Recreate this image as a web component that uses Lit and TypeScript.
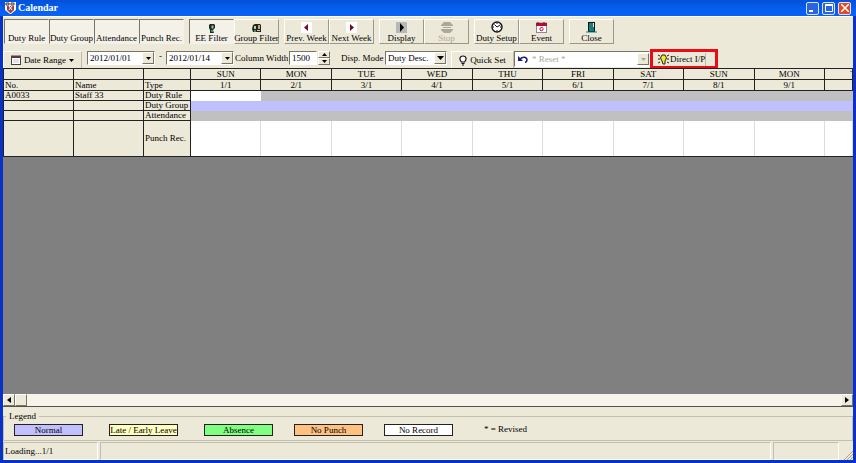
import { LitElement, html, svg, css, nothing } from "lit";
import { customElement } from "lit/decorators.js";
import { classMap } from "lit/directives/class-map.js";

const icons: Record<string, unknown> = {
  app: svg`<svg width="11" height="12" viewBox="0 0 11 12"><path d="M0 0h11v8L6 12H5L0 8z" fill="#fff"/><path d="M1 1h3v2H1zM6 1h3v2H6z" fill="none" stroke="#333"/><path d="M2 4h7v4L6 11H5L2 8z" fill="#a34050"/><path d="M4 4l3 4M7 4L4 8" stroke="#fff"/></svg>`,
  person: svg`<svg width="10" height="10" viewBox="0 0 10 10"><path d="M3 1h4l1 1v3L6 7 7 10H3V7L2 5V2z" fill="#1a2a28"/><path d="M4.500 2.500h2v3h-2z" fill="#c8b46a"/><path d="M4 7h2v2H4z" fill="#2a9088"/></svg>`,
  group: svg`<svg width="10" height="10" viewBox="0 0 10 10"><path d="M1 2l2-1h5l1 1v7H1L0 6z" fill="#222"/><path d="M2 3h2v3H2z" fill="#d8c680"/><path d="M6 2h2v4H6z" fill="#d0a850"/><path d="M2 7h2v2H2z" fill="#2a9088"/><path d="M5 7h3v1H5z" fill="#ccc"/></svg>`,
  prev: svg`<svg width="11" height="11" viewBox="0 0 11 11"><rect width="11" height="11" fill="#fff"/><path d="M7 2v7L3 5.500z" fill="#7a0a1c"/></svg>`,
  next: svg`<svg width="11" height="11" viewBox="0 0 11 11"><rect width="11" height="11" fill="#fff"/><path d="M4 2v7l4-3.500z" fill="#7a0a1c"/></svg>`,
  display: svg`<svg width="11" height="11" viewBox="0 0 11 11"><rect width="11" height="11" fill="#b8b8b8"/><path d="M4 1v9l4-4.500z" fill="#000"/></svg>`,
  stop: svg`<svg width="12" height="11" viewBox="0 0 12 11"><path d="M3 0h6l3 3v1H0V3zM0 7h12v1L9 11H3L0 8z" fill="#aca899"/><path d="M2 5.500h8" stroke="#aca899"/></svg>`,
  clock: svg`<svg width="12" height="12" viewBox="0 0 12 12"><circle cx="6" cy="6" r="5" fill="#fff" stroke="#111" stroke-width="1.400"/><path d="M3.500 3.500L6 6l3-2M6 2v1M6 9v1M2 6h1M9 6h1" fill="none" stroke="#111"/></svg>`,
  event: svg`<svg width="11" height="11" viewBox="0 0 11 11"><rect x=".5" y="1" width="10" height="9.500" fill="#fff" stroke="#a08090"/><path d="M0 1h11v3H0z" fill="#b01030"/><path d="M2 0v2M8 0v2" stroke="#333"/><path d="M7 5L4 6v2l1 1 2-1V6" fill="none" stroke="#d02040"/></svg>`,
  door: svg`<svg width="11" height="11" viewBox="0 0 11 11"><path d="M2 0h7v10H2z" fill="#111"/><path d="M3 1h5v8H3z" fill="#128080"/><path d="M7 1h1v4H7z" fill="#e8e8e8"/><path d="M0 10h11" stroke="#128080"/></svg>`,
  calendar: svg`<svg width="10" height="10" viewBox="0 0 10 10"><rect x=".5" y="1" width="9" height="8.500" fill="#fff" stroke="#444"/><path d="M0 1h10v2H0z" fill="#5a3a4a"/><path d="M2 5h6M2 7h6" stroke="#c8c8c8"/></svg>`,
  bulb: svg`<svg width="8" height="11" viewBox="0 0 8 11"><path d="M2.500 7C0 4.500.5 1 4 1s4 3.500 1.500 6z" fill="#fff" stroke="#111" stroke-width="1.200"/><path d="M2.500 8.500h3M3 10h2" stroke="#111"/></svg>`,
  undo: svg`<svg width="10" height="9" viewBox="0 0 10 9"><path d="M2 4c3-3 7-2 7 1 0 1-.5 2-2 2.500" fill="none" stroke="#1a1a80" stroke-width="1.500"/><path d="M0 1v5h5z" fill="#1a1a80"/></svg>`,
  flash: svg`<svg width="11" height="11" viewBox="0 0 11 11"><path d="M0 1l2 1M0 5h2M0 9l2-1M11 1L9 2M11 5H9M11 9L9 8" stroke="#222"/><path d="M4 7L2.500 4 4 1h3l1.500 3L7 7v3H5z" fill="#f4ee20" stroke="#222"/></svg>`,
  down: svg`<svg width="7" height="4" viewBox="0 0 7 4"><path d="M0 0h7L3.500 4z" fill="currentColor"/></svg>`,
  downS: svg`<svg width="5" height="3" viewBox="0 0 5 3"><path d="M0 0h5L2.500 3z" fill="currentColor"/></svg>`,
  upS: svg`<svg width="5" height="3" viewBox="0 0 5 3"><path d="M0 3h5L2.500 0z" fill="currentColor"/></svg>`,
  left: svg`<svg width="4" height="6" viewBox="0 0 4 6"><path d="M4 0v6L0 3z"/></svg>`,
  right: svg`<svg width="4" height="6" viewBox="0 0 4 6"><path d="M0 0v6l4-3z"/></svg>`,
  min: svg`<svg width="8" height="8" viewBox="0 0 8 8"><path d="M0 7h4" stroke="#fff" stroke-width="2"/></svg>`,
  max: svg`<svg width="8" height="8" viewBox="0 0 8 8"><path d="M.5 1h7v6.500h-7z" fill="none" stroke="#fff"/><path d="M0 1h8" stroke="#fff" stroke-width="2"/></svg>`,
  close: svg`<svg width="8" height="8" viewBox="0 0 8 8"><path d="M0 0l8 8M8 0L0 8" stroke="#fff" stroke-width="1.500"/></svg>`,
  grip: svg`<svg width="10" height="10" viewBox="0 0 10 10"><path d="M1 10l9-9M4 10l6-6M7 10l3-3" stroke="#a8a490"/></svg>`,
};

interface Tool { label: string; icon?: string; down?: boolean; off?: boolean }

const tools: Tool[][] = [
  [
    { label: "Duty Rule", down: true },
    { label: "Duty Group", down: true },
    { label: "Attendance", down: true },
    { label: "Punch Rec.", down: true },
  ],
  [{ label: "EE Filter", icon: "person", down: true }, { label: "Group Filter", icon: "group" }],
  [{ label: "Prev. Week", icon: "prev" }, { label: "Next Week", icon: "next" }],
  [{ label: "Display", icon: "display" }, { label: "Stop", icon: "stop", off: true }],
  [{ label: "Duty Setup", icon: "clock" }, { label: "Event", icon: "event" }],
  [{ label: "Close", icon: "door" }],
];

const days = ["SUN", "MON", "TUE", "WED", "THU", "FRI", "SAT", "SUN", "MON", "TUE"];

const rows = [
  { no: "A0033", name: "Staff 33", type: "Duty Rule", tone: "grey" },
  { no: "", name: "", type: "Duty Group", tone: "lilac" },
  { no: "", name: "", type: "Attendance", tone: "grey" },
  { no: "", name: "", type: "Punch Rec.", tone: "white" },
];

const legend = [
  ["Normal", "normal"],
  ["Late / Early Leave", "late"],
  ["Absence", "absence"],
  ["No Punch", "nopunch"],
  ["No Record", "norecord"],
];

@customElement("app-root")
export class AppRoot extends LitElement {
  static styles = css`
    :host {
      display: flex;
      flex-direction: column;
      box-sizing: border-box;
      min-height: 100vh;
      border: solid #0831c8;
      border-width: 0 3px 3px;
      background: #ece9d8;
      color: #000;
      font: 9px/10px "Liberation Serif", "Times New Roman", serif;
      white-space: nowrap;
    }
    *, *::before, *::after { box-sizing: border-box; }
    svg { display: block; flex: none; }
    button, input, select {
      font: inherit;
      color: inherit;
      margin: 0;
      padding: 0;
      border: 0;
      border-radius: 0;
      background: #ece9d8;
      min-width: 0;
    }
    button { display: flex; align-items: center; justify-content: center; }

    .title {
      display: flex;
      align-items: center;
      height: 16px;
      margin: 0 -3px;
      padding: 0 5px;
      gap: 2px;
      background: linear-gradient(#0450d8, #0560f0 60%, #0862f8);
      color: #fff;
    }
    .title h1 { flex: 1; margin: 0; font-size: 10px; line-height: 12px; }
    .win { display: flex; gap: 3px; }
    .win button { width: 13px; height: 13px; border: 1px solid #d8e4fc; border-radius: 2px; background: #2a64e0; }
    .win .x { background: #e04a24; }

    .tools { display: flex; gap: 5px; padding: 2px 0 0 1px; border-top: 1px solid #fff; }
    .set { display: flex; }
    .tool {
      width: 45px;
      height: 25px;
      flex-direction: column;
      justify-content: flex-end;
      border: 1px solid;
      border-color: #fff #9c9888 #9c9888 #fff;
    }
    .tool.down { background: #f4f2e8; border-color: #77746a #f4f2e8 #f4f2e8 #77746a; }
    .tool.off { color: #aca899; }

    .bar { display: flex; align-items: flex-start; padding: 7px 0 0; height: 24px; }
    .flat { height: 18px; gap: 3px; border: 1px solid; border-color: #fff #c0bca8 #c0bca8 #fff; }
    .range { width: 79px; margin-right: 5px; }
    .quick { width: 63px; gap: 3px; margin-left: 4px; }
    .box {
      display: flex;
      align-items: center;
      height: 14px;
      border: 1px solid;
      border-color: #77746a #fff #fff #77746a;
      background: #fff;
    }
    .box input, .box select { flex: 1; width: 0; height: 12px; padding-left: 2px; background: #fff; appearance: none; outline: 0; }
    .box button, .drop { flex: none; display: flex; align-items: center; justify-content: center; width: 12px; height: 12px; background: #ece9d8; border: 1px solid; border-color: #fff #77746a #77746a #fff; }
    .date { width: 68px; }
    .dash { width: 11px; text-align: center; }
    .lab { line-height: 14px; }
    .gapl { margin-left: 1px; width: 54px; }
    .num { width: 28px; }
    .spin { display: flex; flex-direction: column; width: 12px; margin: 0 11px 0 1px; }
    .spin button { height: 7px; border: 1px solid; border-color: #fff #77746a #77746a #fff; }
    .mode { width: 44px; }
    .disp { position: relative; width: 62px; }
    .reset { width: 136px; height: 16px; padding-left: 3px; }
    .reset, .reset button { color: #aca899; }
    .reset input { padding-left: 4px; }
    .mark { display: flex; align-items: center; height: 20px; width: 68px; margin-top: -2px; border: 3px solid #ee0a14; }
    .mark button { flex: 1; height: 13px; margin: 0 9px 0 5px; gap: 1px; border-right: 1px solid #c0bca8; justify-content: flex-start; }

    .grid { flex: 1; background: #808080; overflow: hidden; min-height: 160px; }
    table { width: 100%; table-layout: fixed; border-collapse: collapse; border-bottom: 1px solid #222; }
    th, td { padding: 0 0 0 1px; height: 11px; line-height: 10px; font-weight: 400; text-align: left; overflow: hidden; border: 1px solid #222; background: #ece9d8; }
    td { height: 10px; line-height: 9px; }
    th.day { text-align: center; padding: 0; }
    .cut { display: block; width: 68px; }
    .c1 { width: 70px; }
    .c3 { width: 47px; }
    .c4 { width: 28px; }
    td.grey { background: #c0c0c0; border-color: #c0c0c0; }
    td.lilac { background: #c0c0ff; border-color: #c0c0ff; }
    td.white { background: #fff; border-color: #fff #dcdcdc; }
    td.open { background: #fff; border-color: #fff; }
    tr.tall td { height: 36px; }
    tr:last-child td { border-bottom-color: #222; }

    .scroll { display: flex; height: 13px; background: #f5f3ea; border-bottom: 1px solid #55524a; }
    .scroll button { width: 12px; border: 1px solid; border-color: #fff #77746a #77746a #fff; }
    .thumb { width: 12px; background: #ece9d8; border: 1px solid; border-color: #fff #77746a #77746a #fff; }
    .track { flex: 1; }

    fieldset { display: flex; margin: 4px 0 0; padding: 3px 0 4px 10px; border: 1px solid #c2bfae; min-width: 0; }
    legend { margin-left: -8px; padding: 0 3px; }
    .key { width: 69px; height: 12px; margin-right: 26px; border: 1px solid #222; text-align: center; }
    .normal { background: #c0c0ff; }
    .late { background: #ffffc0; }
    .absence { background: #80ff80; margin-right: 21px; }
    .nopunch { background: #ffc080; margin-right: 21px; }
    .norecord { background: #fff; margin-right: 31px; }

    .status { display: flex; height: 19px; padding-top: 1px; gap: 2px; }
    .status div { border: 1px solid; border-color: #c2bfae #fff #fff #c2bfae; padding: 3px 1px; }
    .s1 { width: 95px; }
    .s2 { flex: 1; }
    .s3 { width: 66px; }
    .grip { align-self: flex-end; margin-left: 2px; }
  `;

  private tool(t: Tool) {
    return html`<button class=${classMap({ tool: true, down: !!t.down, off: !!t.off })} ?disabled=${!!t.off}>
      ${t.icon ? icons[t.icon] : nothing}<span>${t.label}</span>
    </button>`;
  }

  private date(value: string, label: string) {
    return html`<div class="box date">
      <input type="text" aria-label=${label} .value=${value} /><button aria-label="Open calendar">${icons.downS}</button>
    </div>`;
  }

  private dayCell(text: string, i: number) {
    return html`<th class="day">${i === 9 ? html`<span class="cut">${text}</span>` : text}</th>`;
  }

  render() {
    return html`
      <header class="title">
        ${icons.app}
        <h1>Calendar</h1>
        <div class="win">
          <button aria-label="Minimize">${icons.min}</button>
          <button aria-label="Maximize">${icons.max}</button>
          <button class="x" aria-label="Close window">${icons.close}</button>
        </div>
      </header>
      <nav class="tools">${tools.map((g) => html`<div class="set">${g.map((t) => this.tool(t))}</div>`)}</nav>
      <div class="bar">
        <button class="flat range">${icons.calendar}<span>Date Range</span>${icons.downS}</button>
        ${this.date("2012/01/01", "From")}
        <span class="dash">-</span>
        ${this.date("2012/01/14", "To")}
        <label class="lab gapl" for="cw">Column Width</label>
        <div class="box num"><input id="cw" type="text" .value=${"1500"} /></div>
        <div class="spin"><button aria-label="Wider">${icons.upS}</button><button aria-label="Narrower">${icons.downS}</button></div>
        <label class="lab mode" for="dm">Disp. Mode</label>
        <div class="box disp"><select id="dm"><option>Duty Desc.</option></select><span class="drop">${icons.down}</span></div>
        <button class="flat quick">${icons.bulb}<span>Quick Set</span></button>
        <div class="box reset">
          ${icons.undo}<input type="text" aria-label="Quick set value" disabled .value=${"* Reset *"} /><button disabled aria-label="Open list">${icons.downS}</button>
        </div>
        <div class="mark"><button>${icons.flash}<span>Direct I/P</span></button></div>
      </div>
      <main class="grid">
        <table>
          <colgroup>
            <col class="c1" /><col class="c1" /><col class="c3" />
            ${days.map((_, i) => html`<col class=${i === 9 ? "c4" : ""} />`)}
          </colgroup>
          <thead>
            <tr><th></th><th></th><th></th>${days.map((d, i) => this.dayCell(d, i))}</tr>
            <tr><th>No.</th><th>Name</th><th>Type</th>${days.map((_, i) => this.dayCell(`${i + 1}/1`, i))}</tr>
          </thead>
          <tbody>
            ${rows.map((r, n) => html`<tr class=${n === 3 ? "tall" : ""}>
              <td>${r.no}</td><td>${r.name}</td><td>${r.type}</td>
              ${days.map((_, i) => html`<td class=${n === 0 && i === 0 ? "open" : r.tone}></td>`)}
            </tr>`)}
          </tbody>
        </table>
      </main>
      <div class="scroll">
        <button aria-label="Scroll left">${icons.left}</button>
        <div class="thumb"></div>
        <div class="track"></div>
        <button aria-label="Scroll right">${icons.right}</button>
      </div>
      <fieldset>
        <legend>Legend</legend>
        ${legend.map(([t, c]) => html`<span class="key ${c}">${t}</span>`)}
        <span>* = Revised</span>
      </fieldset>
      <footer class="status">
        <div class="s1">Loading...1/1</div>
        <div class="s2"></div>
        <div class="s3"></div>
        <span class="grip">${icons.grip}</span>
      </footer>
    `;
  }
}
